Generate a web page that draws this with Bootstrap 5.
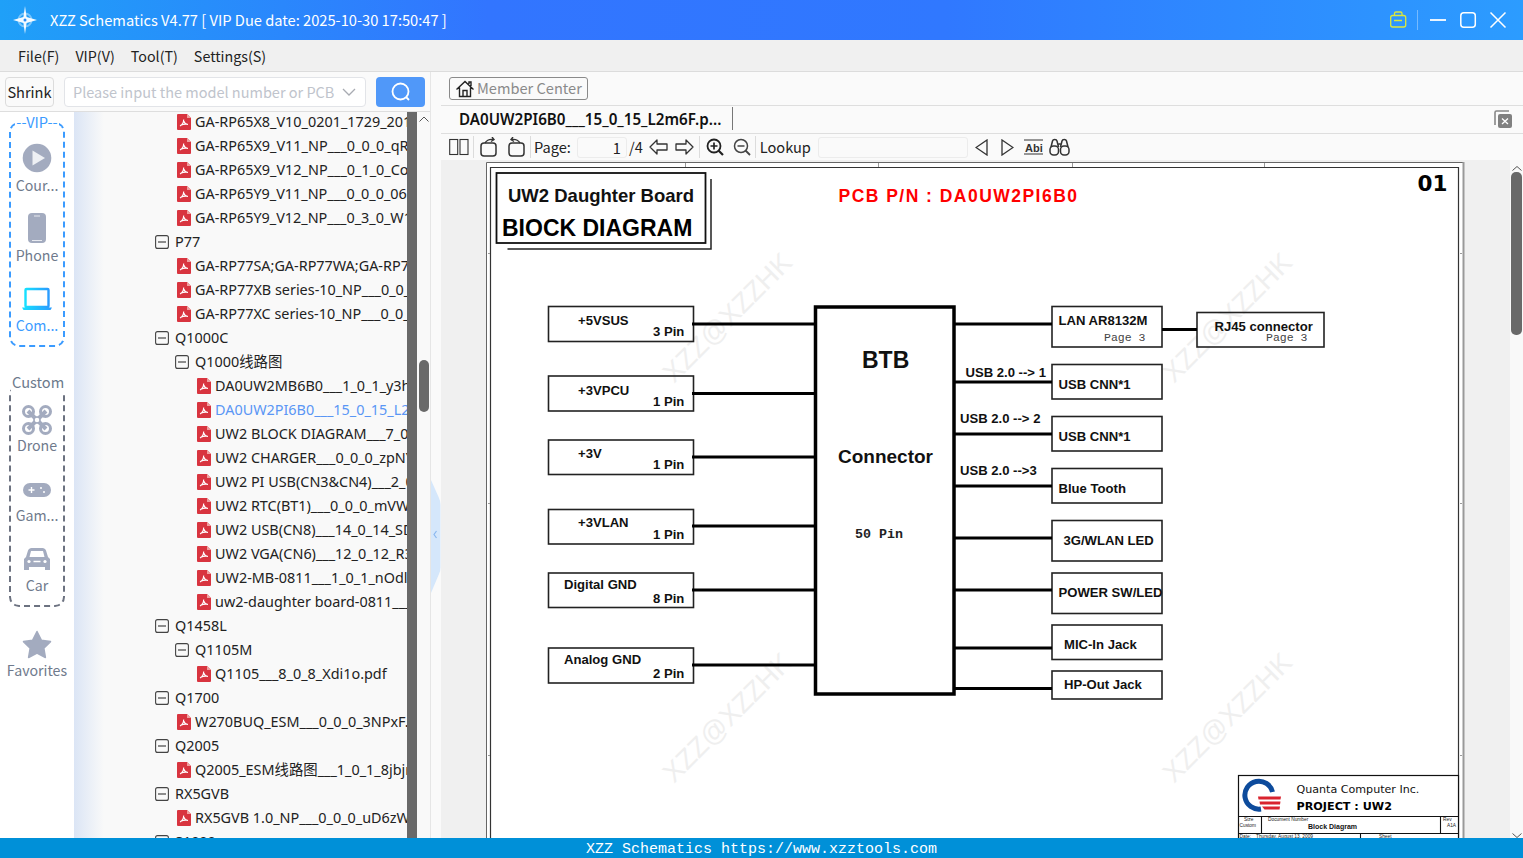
<!DOCTYPE html>
<html lang="en"><head><meta charset="utf-8"><title>XZZ Schematics</title>
<link rel="stylesheet" href="https://cdn.jsdelivr.net/npm/bootstrap@5.3.0/dist/css/bootstrap.min.css">
<style>
html,body{height:100%;overflow:hidden}
body{font-family:"Noto Sans CJK SC","Noto Sans",sans-serif;font-size:15px;color:#222;background:#fafafa}
.app-shell{height:858px;width:1523px}
.app-title{height:40px;background:linear-gradient(90deg,#1fa0f8,#3275ff 32%,#3078ff 62%,#2c9cff);color:#fff;font-size:14.67px;padding-left:13px}
.app-title .ttl{margin-left:13px}
.app-menu{height:32px;background:#f0f0f0;border-bottom:1px solid #dcdcdc;padding-left:18px;gap:16px;font-size:14.3px;color:#222}
.app-main{flex:1 1 0;min-height:0}
.app-left{width:431px;border-right:1px solid #e6e6e6;background:#fff}
.app-search{height:40px;padding:5px 5px 4px;background:#fafafa;border-bottom:1px solid #dedede}
.app-shrink{width:49px;height:30px;padding:0;font-size:14.6px;border:1px solid #dcdcdc;border-radius:4px;color:#222;background:#fafafa;line-height:1}
.app-input{width:302px;height:30px;margin-left:10px;border:1px solid #e2e4e8;border-radius:4px;background:#fff;padding:0 9px 0 8px;color:#c0c4cc;font-size:14.5px}
.app-go{width:49px;height:30px;margin-left:10px;padding:0;background:#5098f9;border:0;border-radius:4px}
.app-leftbody{flex:1 1 0;min-height:0}
.app-rail{width:74px;background:#fff;padding-top:10px;flex:none}
.app-grp{position:relative;width:56px;margin-left:9px;border:2px dashed #3b9bff;border-radius:10px;padding-top:19px}
.app-grp.vip{height:225px;margin-bottom:38px}
.app-grp.vip svg{margin-bottom:2px}
.app-grp.cus{height:222px;border-color:#6c7280;padding-top:18px}
.app-grp.cus svg{margin-bottom:0}
.app-glabel{position:absolute;top:-12px;left:0;right:0;text-align:center;line-height:20px;font-size:14.6px;color:#3b9bff}
.app-glabel span{background:#fff;padding:0 1px}
.cus .app-glabel{color:#6c7a8c;top:-15px}
.app-ritem{height:70px;display:flex;flex-direction:column;align-items:center;color:#6f7a8c;font-size:14.2px;line-height:20px;white-space:nowrap}
.app-ritem svg{display:block;height:30px;flex:none}
.app-ritem.on{color:#3b9bff}
.app-fav{margin-top:23px;width:74px;height:60px}
.app-tree{width:333px;flex:none;overflow:hidden;background:linear-gradient(90deg,#dbe5f5,#f9f9f9 30px);font-family:"Noto Sans","Noto Sans CJK SC",sans-serif;font-size:14.4px;color:#222}
.app-rows{margin-top:-2px}
.app-row{height:24px;display:flex;align-items:center;white-space:nowrap;padding-bottom:1px}
.app-row svg{flex:none;margin-top:1px}
.d1{padding-left:81px}.d2{padding-left:101px}.f2{padding-left:103px}.f3{padding-left:123px}
.d1 svg,.d2 svg{margin-right:6px}
.f2 svg,.f3 svg{margin-right:4px}
.app-row.sel{color:#5a96f5}
.app-bar{width:10px;background:#696969;flex:none}
.app-sb{width:14px;flex:none;background:#f9f9f9;position:relative;padding:0 1px 0 2px}
.app-thumb{background:#696969;border-radius:5px;width:10px}
.app-up{display:block;margin-left:0;margin-top:4px;margin-bottom:238px}
.app-handle{position:absolute;left:431px;top:408px}
.app-right{flex:1 1 0;min-width:0;position:relative;background:#fafafa}
.app-mem{height:34px;padding:5px 8px;border-bottom:1px solid #dedede}
.app-membtn{height:23px;width:139px;padding:0 0 0 5px;border:1px solid #8a8a8a;border-radius:3px;background:#fafafa;color:#8a8a8a;font-size:14.6px;line-height:1;gap:2px}
.app-tabs{height:28px;border-bottom:1px solid #dedede;padding-right:11px}
.app-tab{width:292px;margin-top:1px;height:23px;padding-left:18px;border-right:1px solid #777;font-family:"Noto Sans","Noto Sans CJK SC",sans-serif;font-weight:600;font-size:15.2px;color:#111;line-height:25px;white-space:nowrap;overflow:hidden}
.app-tools{height:26px;padding-left:8px;color:#222;font-size:14.6px}
.app-sep{width:1px;height:22px;background:#dcdcdc;flex:none}
.app-num{height:21px;border:1px solid #ececec;border-radius:3px;background:#fafafa;padding:0 5px;text-align:right;line-height:19px;flex:none}
.app-pdf{flex:1 1 0;min-height:0}
.app-canvas{width:1069px;height:678px;display:block;background:#f0f0f0;flex:none}
.app-pdfsb{width:13px;background:#f9f9f9;flex:none;padding:0 1px}
.app-pdfsb .thumb2{background:#696969;border-radius:5px;width:11px;height:163px}
.app-foot{height:20px;background:#0090d8;color:#fff;font-family:"Liberation Mono",monospace;font-size:15px;line-height:21px;flex:none;overflow:hidden;padding-top:1px}
.s{font-family:"Liberation Sans",sans-serif;font-weight:700;font-size:13.1px;fill:#111}
.m{font-family:"Liberation Mono",monospace;font-size:11.5px;fill:#444}
.wm{font-family:"Liberation Sans",sans-serif;font-size:27.4px;fill:#efefef}
.b{fill:none;stroke:#222;stroke-width:1.6}
.w{stroke:#000;stroke-width:3;fill:none}
.t{stroke:#999;stroke-width:1;fill:none}
</style></head>
<body>
<svg width="0" height="0" class="position-absolute">
<symbol id="pdf" viewBox="0 0 14 16"><path d="M1 0h9l4 4v11a1 1 0 0 1-1 1H1a1 1 0 0 1-1-1V1a1 1 0 0 1 1-1z" fill="#d8343f"/><path d="M10 0l4 4h-4z" fill="#f0a0a0"/><path d="M3 12c2-1 3.500-3.500 3.700-6.500M6.700 7c.6 2 2 3.300 4.300 3.500M3.300 11.500c2.500-1.300 5-1.700 7.500-1.200" fill="none" stroke="#fff" stroke-width="1.100"/></symbol>
<symbol id="minus" viewBox="0 0 14 14"><rect x=".6" y=".6" width="12.800" height="12.800" rx="2" fill="none" stroke="#444" stroke-width="1.100"/><path d="M3 7h8" stroke="#444" stroke-width="1.200"/></symbol>
</svg>
<div class="app-shell d-flex flex-column">
 <div class="app-title d-flex align-items-center flex-none">
  <svg width="24" height="32" viewBox="0 0 24 32"><path d="M12 2l1.600 11 10.400 3-10.400 3L12 30l-1.600-11L0 16l10.400-3z" fill="#fff" opacity=".95"/><circle cx="12" cy="16" r="6.500" fill="none" stroke="#fff" stroke-opacity=".4" stroke-width="2"/><circle cx="12" cy="16" r="1.500" fill="#2a8cf5"/></svg>
  <span class="ttl">XZZ Schematics V4.77 [ VIP Due date: 2025-10-30 17:50:47 ]</span>
  <svg class="ms-auto" width="133" height="40" viewBox="0 0 133 40"><g transform="translate(-1390 0)"><rect x="1390.700" y="15.500" width="15" height="11.500" rx="2" fill="none" stroke="#dbe83c" stroke-width="1.300"/><path d="M1394.500 15v-1.500a1.500 1.500 0 0 1 1.500-1.500h4.500a1.500 1.500 0 0 1 1.500 1.500V15M1394 20.500h8" fill="none" stroke="#dbe83c" stroke-width="1.300"/><path d="M1417.500 10v20" stroke="#fff" stroke-opacity=".35"/><path d="M1430 20h16" stroke="#fff" stroke-width="1.800"/><rect x="1460.800" y="12.800" width="14.500" height="14.500" rx="3" fill="none" stroke="#fff" stroke-width="1.500"/><path d="M1490.500 12.500l15 15m0-15l-15 15" stroke="#fff" stroke-width="1.500"/></g></svg>
 </div>
 <div class="app-menu d-flex align-items-center"><span>File(F)</span><span>VIP(V)</span><span>Tool(T)</span><span>Settings(S)</span></div>
 <div class="app-main d-flex position-relative">
  <div class="app-left d-flex flex-column flex-none">
   <div class="app-search d-flex">
    <button class="btn app-shrink">Shrink</button>
    <div class="app-input d-flex align-items-center justify-content-between"><span>Please input the model number or PCB</span><svg width="14" height="8" viewBox="0 0 14 8"><path d="M1 1l6 6 6-6" fill="none" stroke="#a8abb2" stroke-width="1.300"/></svg></div>
    <button class="btn app-go d-flex align-items-center justify-content-center"><svg width="20" height="20" viewBox="0 0 20 20"><circle cx="9.500" cy="9.500" r="8" fill="none" stroke="#fff" stroke-width="1.800"/><path d="M15 15l3 3" stroke="#fff" stroke-width="1.800"/></svg></button>
   </div>
   <div class="app-leftbody d-flex overflow-hidden">
    <div class="app-rail">
     <div class="app-grp vip"><div class="app-glabel"><span>--VIP--</span></div>
      <div class="app-ritem"><svg width="30" viewBox="0 0 30 30"><circle cx="15" cy="15" r="14.300" fill="#a3abbf"/><path d="M10.500 7.500L23 15l-12.500 7.500z" fill="#eef0f4"/></svg>Cour...</div>
      <div class="app-ritem"><svg width="30" viewBox="0 0 30 30"><rect x="6" y="0" width="18" height="30" rx="4" fill="#a3abbf"/><path d="M12 3h6M10 27.500h10" stroke="#e8eaf0" stroke-width="1.200"/></svg>Phone</div>
      <div class="app-ritem on"><svg width="32" viewBox="0 0 32 30"><defs><linearGradient id="lg" x1="0" x2="1"><stop offset="0" stop-color="#16e0ff"/><stop offset="1" stop-color="#2a9cff"/></linearGradient></defs><rect x="4.500" y="6" width="23" height="18" rx="1" fill="none" stroke="url(#lg)" stroke-width="2.400"/><path d="M1 24.500h30l-1.500 2.500H2.500z" fill="url(#lg)"/></svg>Com...</div>
     </div>
     <div class="app-grp cus"><div class="app-glabel"><span>Custom</span></div>
      <div class="app-ritem"><svg width="30" viewBox="0 0 30 30"><g fill="none" stroke="#a3abbf"><path d="M6 6l18 18M24 6L6 24" stroke-width="4"/><circle cx="6.500" cy="6.500" r="5" stroke-width="3"/><circle cx="23.500" cy="6.500" r="5" stroke-width="3"/><circle cx="6.500" cy="23.500" r="5" stroke-width="3"/><circle cx="23.500" cy="23.500" r="5" stroke-width="3"/><circle cx="15" cy="15" r="3" fill="#fff" stroke-width="1.500"/></g></svg>Drone</div>
      <div class="app-ritem"><svg width="30" viewBox="0 0 30 30"><rect x="1" y="8" width="28" height="14" rx="7" fill="#a3abbf"/><path d="M6.500 15h6M9.500 12v6" stroke="#fff" stroke-width="1.400"/><circle cx="19" cy="13" r="1" fill="#fff"/><circle cx="22" cy="17" r="1" fill="#fff"/></svg>Gam...</div>
      <div class="app-ritem"><svg width="30" viewBox="0 0 30 30"><path d="M6 5.500C6.500 4 8 3 9.500 3h11c1.500 0 3 1 3.500 2.500L26 12l2 2v11h-5v-3H7v3H2V14l2-2z" fill="#a3abbf"/><path d="M7.500 12l1.500-6h12l1.500 6z" fill="#fff"/><circle cx="7" cy="16.500" r="1.600" fill="#fff"/><circle cx="23" cy="16.500" r="1.600" fill="#fff"/><path d="M11.500 16.500h7" stroke="#fff" stroke-width="1.500"/></svg>Car</div>
     </div>
     <div class="app-ritem app-fav"><svg width="30" viewBox="0 0 30 30"><path d="M15 1.500l4.300 8.700 9.200 1.400-6.700 6.600 1.600 9.300-8.400-4.400-8.400 4.400 1.600-9.300-6.700-6.600 9.200-1.400z" fill="#a3abbf" stroke="#a3abbf" stroke-linejoin="round" stroke-width="1.500"/></svg>Favorites</div>
    </div>
    <div class="app-tree"><div class="app-rows">
     <div class="app-row f2"><svg width="14" height="16"><use href="#pdf"/></svg>GA-RP65X8_V10_0201_1729_2018.pdf</div>
     <div class="app-row f2"><svg width="14" height="16"><use href="#pdf"/></svg>GA-RP65X9_V11_NP___0_0_0_qRt.pdf</div>
     <div class="app-row f2"><svg width="14" height="16"><use href="#pdf"/></svg>GA-RP65X9_V12_NP___0_1_0_Co7.pdf</div>
     <div class="app-row f2"><svg width="14" height="16"><use href="#pdf"/></svg>GA-RP65Y9_V11_NP___0_0_0_06m.pdf</div>
     <div class="app-row f2"><svg width="14" height="16"><use href="#pdf"/></svg>GA-RP65Y9_V12_NP___0_3_0_W1a.pdf</div>
     <div class="app-row d1"><svg width="14" height="14"><use href="#minus"/></svg>P77</div>
     <div class="app-row f2"><svg width="14" height="16"><use href="#pdf"/></svg>GA-RP77SA;GA-RP77WA;GA-RP77.pdf</div>
     <div class="app-row f2"><svg width="14" height="16"><use href="#pdf"/></svg>GA-RP77XB series-10_NP___0_0_0.pdf</div>
     <div class="app-row f2"><svg width="14" height="16"><use href="#pdf"/></svg>GA-RP77XC series-10_NP___0_0_0.pdf</div>
     <div class="app-row d1"><svg width="14" height="14"><use href="#minus"/></svg>Q1000C</div>
     <div class="app-row d2"><svg width="14" height="14"><use href="#minus"/></svg>Q1000线路图</div>
     <div class="app-row f3"><svg width="14" height="16"><use href="#pdf"/></svg>DA0UW2MB6B0___1_0_1_y3h.pdf</div>
     <div class="app-row f3 sel"><svg width="14" height="16"><use href="#pdf"/></svg>DA0UW2PI6B0___15_0_15_L2m6F.pdf</div>
     <div class="app-row f3"><svg width="14" height="16"><use href="#pdf"/></svg>UW2 BLOCK DIAGRAM___7_0_7.pdf</div>
     <div class="app-row f3"><svg width="14" height="16"><use href="#pdf"/></svg>UW2 CHARGER___0_0_0_zpNY.pdf</div>
     <div class="app-row f3"><svg width="14" height="16"><use href="#pdf"/></svg>UW2 PI USB(CN3&amp;CN4)___2_0_2.pdf</div>
     <div class="app-row f3"><svg width="14" height="16"><use href="#pdf"/></svg>UW2 RTC(BT1)___0_0_0_mVW.pdf</div>
     <div class="app-row f3"><svg width="14" height="16"><use href="#pdf"/></svg>UW2 USB(CN8)___14_0_14_SD.pdf</div>
     <div class="app-row f3"><svg width="14" height="16"><use href="#pdf"/></svg>UW2 VGA(CN6)___12_0_12_R3.pdf</div>
     <div class="app-row f3"><svg width="14" height="16"><use href="#pdf"/></svg>UW2-MB-0811___1_0_1_nOdl.pdf</div>
     <div class="app-row f3"><svg width="14" height="16"><use href="#pdf"/></svg>uw2-daughter board-0811___1_0.pdf</div>
     <div class="app-row d1"><svg width="14" height="14"><use href="#minus"/></svg>Q1458L</div>
     <div class="app-row d2"><svg width="14" height="14"><use href="#minus"/></svg>Q1105M</div>
     <div class="app-row f3"><svg width="14" height="16"><use href="#pdf"/></svg>Q1105___8_0_8_Xdi1o.pdf</div>
     <div class="app-row d1"><svg width="14" height="14"><use href="#minus"/></svg>Q1700</div>
     <div class="app-row f2"><svg width="14" height="16"><use href="#pdf"/></svg>W270BUQ_ESM___0_0_0_3NPxF.pdf</div>
     <div class="app-row d1"><svg width="14" height="14"><use href="#minus"/></svg>Q2005</div>
     <div class="app-row f2"><svg width="14" height="16"><use href="#pdf"/></svg>Q2005_ESM线路图___1_0_1_8jbjr.pdf</div>
     <div class="app-row d1"><svg width="14" height="14"><use href="#minus"/></svg>RX5GVB</div>
     <div class="app-row f2"><svg width="14" height="16"><use href="#pdf"/></svg>RX5GVB 1.0_NP___0_0_0_uD6zW.pdf</div>
     <div class="app-row d1"><svg width="14" height="14"><use href="#minus"/></svg>S1000</div>
    </div></div>
    <div class="app-bar"></div>
    <div class="app-sb"><svg class="app-up" width="10" height="6" viewBox="0 0 10 6"><path d="M.5 5.500L5 1l4.500 4.500" fill="none" stroke="#555"/></svg><div class="app-thumb" style="height:52px"></div></div>
   </div>
  </div>
  <svg class="app-handle" width="10" height="113" viewBox="0 0 10 113"><path d="M0 0l8 18q1.500 3 1.500 7v62q0 4-1.500 7L0 113z" fill="#d5e7fb"/><path d="M5.500 51l-2.500 3.500 2.500 3.500" fill="none" stroke="#8ab8f0" stroke-width="1.200"/></svg>
  <div class="app-right d-flex flex-column ms-auto" style="width:1082px;flex:none">
   <div class="app-mem"><button class="btn app-membtn d-flex align-items-center"><svg width="20" height="20" viewBox="0 0 20 20"><path d="M1.500 10.500L10 2.500l8.500 8M4.500 8.500v9h11v-9M8 17.500v-6h4v6M14 5V3h2v4" fill="none" stroke="#222" stroke-width="1.400"/></svg>Member Center</button></div>
   <div class="app-tabs d-flex align-items-start justify-content-between"><div class="app-tab">DA0UW2PI6B0___15_0_15_L2m6F.p...</div>
    <svg class="mt-1" width="18" height="19" viewBox="0 0 18 19"><path d="M1 15V2.500A1.500 1.500 0 0 1 2.500 1H15" fill="none" stroke="#888" stroke-width="1.600"/><rect x="4" y="4" width="14" height="14" rx="2" fill="#808080"/><path d="M8 8.500l6 5.500m0-5.500l-6 5.500" stroke="#fff" stroke-width="1.300"/></svg></div>
   <div class="app-tools d-flex align-items-center">
    <svg width="20" height="18" viewBox="0 0 20 18"><rect x=".7" y="1.500" width="8" height="15" fill="none" stroke="#333" stroke-width="1.100"/><rect x="11" y="1.500" width="8" height="15" fill="none" stroke="#333" stroke-width="1.100"/></svg>
    <div class="app-sep ms-1"></div>
    <svg style="margin-left:6px" width="18" height="20" viewBox="0 0 18 20"><rect x="1" y="6" width="15" height="13" rx="3" fill="none" stroke="#333" stroke-width="1.500"/><path d="M5 6c2-3 5-4 8-3.500M12 0l2 2.500-3 2" fill="none" stroke="#333" stroke-width="1.400"/></svg>
    <svg class="ms-2" width="19" height="20" viewBox="0 0 19 20"><rect x="3" y="6" width="15" height="13" rx="3" fill="none" stroke="#333" stroke-width="1.500"/><path d="M14 6c-2-3-5-4-8-3.500M7 0L5 2.500l3 2" fill="none" stroke="#333" stroke-width="1.400"/></svg>
    <div class="app-sep" style="margin-left:5px"></div>
    <span style="margin-left:3px">Page:</span>
    <div class="app-num" style="width:50px;margin-left:6px">1</div>
    <span style="margin-left:2px">/4</span>
    <svg style="margin-left:6px" width="19" height="18" viewBox="0 0 19 18"><path d="M1 9l7-7v4h10v6H8v4z" fill="none" stroke="#333" stroke-width="1.300" stroke-linejoin="round"/></svg>
    <svg style="margin-left:7px" width="19" height="18" viewBox="0 0 19 18"><path d="M18 9l-7-7v4H1v6h10v4z" fill="none" stroke="#333" stroke-width="1.300" stroke-linejoin="round"/></svg>
    <div class="app-sep" style="margin-left:5px"></div>
    <svg style="margin-left:6px" width="18" height="18" viewBox="0 0 18 18"><circle cx="8" cy="8" r="6.500" fill="none" stroke="#222" stroke-width="1.800"/><path d="M12.500 12.500l4.500 4.500" stroke="#222" stroke-width="2.200"/><path d="M4.500 8h7M8 4.500v7" stroke="#222" stroke-width="1.700"/></svg>
    <svg style="margin-left:9px" width="18" height="18" viewBox="0 0 18 18"><circle cx="8" cy="8" r="6.500" fill="none" stroke="#444" stroke-width="1.500"/><path d="M12.500 12.500l4.500 4.500" stroke="#444" stroke-width="1.800"/><path d="M4.500 8h7" stroke="#444" stroke-width="1.500"/></svg>
    <div class="app-sep" style="margin-left:4px"></div>
    <span style="margin-left:4px">Lookup</span>
    <div class="app-num" style="width:150px;margin-left:7px"></div>
    <svg style="margin-left:7px" width="13" height="17" viewBox="0 0 13 17"><path d="M12 1v15L1 8.500z" fill="none" stroke="#333" stroke-width="1.300"/></svg>
    <svg style="margin-left:13px" width="13" height="17" viewBox="0 0 13 17"><path d="M1 1v15l11-7.500z" fill="none" stroke="#333" stroke-width="1.300"/></svg>
    <svg style="margin-left:10px" width="19" height="16" viewBox="0 0 19 16"><path d="M0 1h19M0 15h19" stroke="#333"/><text x="1" y="12.500" font-family="Liberation Sans,sans-serif" font-size="11" font-weight="700" fill="#333">Abi</text></svg>
    <svg style="margin-left:6px" width="21" height="18" viewBox="0 0 21 18"><g fill="none" stroke="#333" stroke-width="1.500"><rect x="1" y="8" width="8.500" height="9" rx="3.500"/><rect x="11.500" y="8" width="8.500" height="9" rx="3.500"/><path d="M2 9l1.500-6c.5-2 4-2 4.500 0l1.500 6M11.500 9L13 3c.5-2 4-2 4.500 0L19 9M9.500 6h2"/></g></svg>
   </div>
   <div class="app-pdf d-flex">
    <svg class="app-canvas" viewBox="441 160 1069 678" xmlns="http://www.w3.org/2000/svg">
     <rect x="486" y="162" width="978" height="678" fill="#fff"/>
     <path d="M486.500 162.500H1464M486.500 162.500V840" stroke="#666" stroke-width="1" fill="none"/>
     <path d="M1463.500 162v678" stroke="#999" stroke-width="2"/>
     <path d="M490.500 840V167.500H1458.500V840" stroke="#333" stroke-width="1.200" fill="none"/>
     <path class="t" d="M685.500 163v4M878.500 163v4M1072.500 163v4M1264.500 163v4M488 253.500h2M488 503.500h2M488 755.500h2M1460 253.500h2M1460 503.500h2M1460 755.500h2"/>
     <g class="wm"><text transform="translate(674 384) rotate(-45)">XZZ@XZZHK</text><text transform="translate(1174 384) rotate(-45)">XZZ@XZZHK</text><text transform="translate(674 784) rotate(-45)">XZZ@XZZHK</text><text transform="translate(1174 784) rotate(-45)">XZZ@XZZHK</text></g>
     <rect x="496.500" y="173" width="209" height="70" fill="none" stroke="#111" stroke-width="1.800"/>
     <path d="M711 179v70H507.500" fill="none" stroke="#222" stroke-width="1.500"/>
     <text x="508" y="202" font-family="Liberation Sans,sans-serif" font-weight="700" font-size="18.500" fill="#111">UW2 Daughter Board</text>
     <text x="502" y="236" font-family="Liberation Sans,sans-serif" font-weight="700" font-size="23" fill="#000">BIOCK DIAGRAM</text>
     <text x="838.500" y="202" font-family="Liberation Sans,sans-serif" font-weight="700" font-size="17.500" letter-spacing="1.470" fill="#f00">PCB P/N : DA0UW2PI6B0</text>
     <text x="1417.500" y="191" font-family="DejaVu Sans,sans-serif" font-weight="700" font-size="21.500" fill="#000">01</text>
     <g class="b">
      <rect x="548.500" y="306.500" width="145" height="35"/><rect x="548.500" y="376" width="145" height="35"/><rect x="548.500" y="440" width="145" height="34.500"/><rect x="548.500" y="509.500" width="145" height="34.500"/><rect x="548.500" y="573" width="145" height="34.500"/><rect x="548.500" y="648" width="145" height="35"/>
      <rect x="1052" y="306.500" width="110" height="40.500"/><rect x="1052" y="364.500" width="110" height="34.500"/><rect x="1052" y="416.500" width="110" height="34.500"/><rect x="1052" y="468.500" width="110" height="34.500"/><rect x="1052" y="520.500" width="110" height="40.500"/><rect x="1052" y="573" width="110" height="40.500"/><rect x="1052" y="625" width="110" height="34.500"/><rect x="1052" y="671" width="110" height="28"/>
      <rect x="1197" y="312.500" width="127" height="34.500"/>
     </g>
     <rect x="815.500" y="307" width="138.500" height="387" fill="none" stroke="#000" stroke-width="3.500"/>
     <path class="w" d="M692 324h123M692 393.500h123M692 457h123M692 526h123M692 590h123M692 665h123M954 324h98M954 382h98M954 434h98M954 486h98M954 538h98M954 590h98M954 648h98M954 688.500h98M1162 329.500h35"/>
     <text class="s" x="862" y="368" style="font-size:23px">BTB</text>
     <text class="s" x="838" y="463" style="font-size:19px">Connector</text>
     <text x="855" y="538" font-family="Liberation Mono,monospace" font-weight="700" font-size="13.300" fill="#222">50 Pin</text>
     <g class="s">
      <text x="578" y="325">+5VSUS</text><text x="653" y="336">3 Pin</text>
      <text x="578" y="394.500">+3VPCU</text><text x="653" y="406">1 Pin</text>
      <text x="578" y="458">+3V</text><text x="653" y="469">1 Pin</text>
      <text x="578" y="527">+3VLAN</text><text x="653" y="539">1 Pin</text>
      <text x="564" y="589">Digital GND</text><text x="653" y="602.500">8 Pin</text>
      <text x="564" y="664">Analog GND</text><text x="653" y="677.500">2 Pin</text>
      <text x="1058.500" y="325">LAN AR8132M</text>
      <text x="1214.500" y="330.500">RJ45 connector</text>
      <text x="965.500" y="376.500">USB 2.0 --&gt; 1</text><text x="1058.500" y="388.500">USB CNN*1</text>
      <text x="960" y="423">USB 2.0 --&gt; 2</text><text x="1058.500" y="440.500">USB CNN*1</text>
      <text x="960" y="475">USB 2.0 --&gt;3</text><text x="1058.500" y="493">Blue Tooth</text>
      <text x="1063.500" y="544.500">3G/WLAN LED</text><text x="1058.500" y="597">POWER SW/LED</text>
      <text x="1064" y="649">MIC-In Jack</text><text x="1064" y="689">HP-Out Jack</text>
     </g>
     <text class="m" x="1104" y="341">Page  3</text><text class="m" x="1266" y="341">Page  3</text>
     <rect x="1238.500" y="775.500" width="220" height="70" fill="#fff" stroke="#111" stroke-width="1.200"/>
     <path d="M1238 816.500h220M1238 833.500h220M1261.500 816.500v17M1440.500 816.500v17M1360.500 833.500v8" stroke="#111" stroke-width="1.100"/>
     <path d="M1272.500 792A14 14 0 1 0 1261 809" fill="none" stroke="#0d4b9c" stroke-width="5"/>
     <path d="M1258 796.500h23l-.5 3h-22zM1259.500 801.500h21l-.5 3h-20zM1262 806.500h18l-.5 3h-15z" fill="#d9232e"/>
     <text x="1296.500" y="792.500" font-family="DejaVu Sans,sans-serif" font-size="11.100" fill="#111">Quanta Computer Inc.</text>
     <text x="1296.500" y="810" font-family="DejaVu Sans,sans-serif" font-weight="700" font-size="11.200" fill="#000">PROJECT : UW2</text>
     <g font-family="Liberation Sans,sans-serif" font-size="4.800" fill="#222"><text x="1244" y="821">Size</text><text x="1239.500" y="827">Custom</text><text x="1268" y="821">Document Number</text><text x="1443" y="821">Rev</text><text x="1447" y="827">A1A</text><text x="1239.500" y="838">Date:</text><text x="1256" y="838">Thursday, August 13, 2009</text><text x="1379" y="838">Sheet</text></g>
     <text x="1308" y="828.500" font-family="Liberation Sans,sans-serif" font-weight="700" font-size="7" fill="#111">Block Diagram</text>
    </svg>
    <div class="app-pdfsb d-flex flex-column"><svg class="d-block mx-auto" style="margin-top:6px;margin-bottom:1px;flex:none" width="10" height="5" viewBox="0 0 10 5"><path d="M.5 4.500L5 .5l4.500 4" fill="none" stroke="#555"/></svg><div class="thumb2"></div><svg class="d-block mx-auto mt-auto" style="flex:none;margin-bottom:0" width="10" height="5" viewBox="0 0 10 5"><path d="M.5 .5L5 4.500 9.500 .5" fill="none" stroke="#555"/></svg></div>
   </div>
  </div>
 </div>
 <div class="app-foot text-center">XZZ Schematics https://www.xzztools.com</div>
</div>
<script src="https://cdn.jsdelivr.net/npm/bootstrap@5.3.0/dist/js/bootstrap.bundle.min.js"></script>
</body></html>
